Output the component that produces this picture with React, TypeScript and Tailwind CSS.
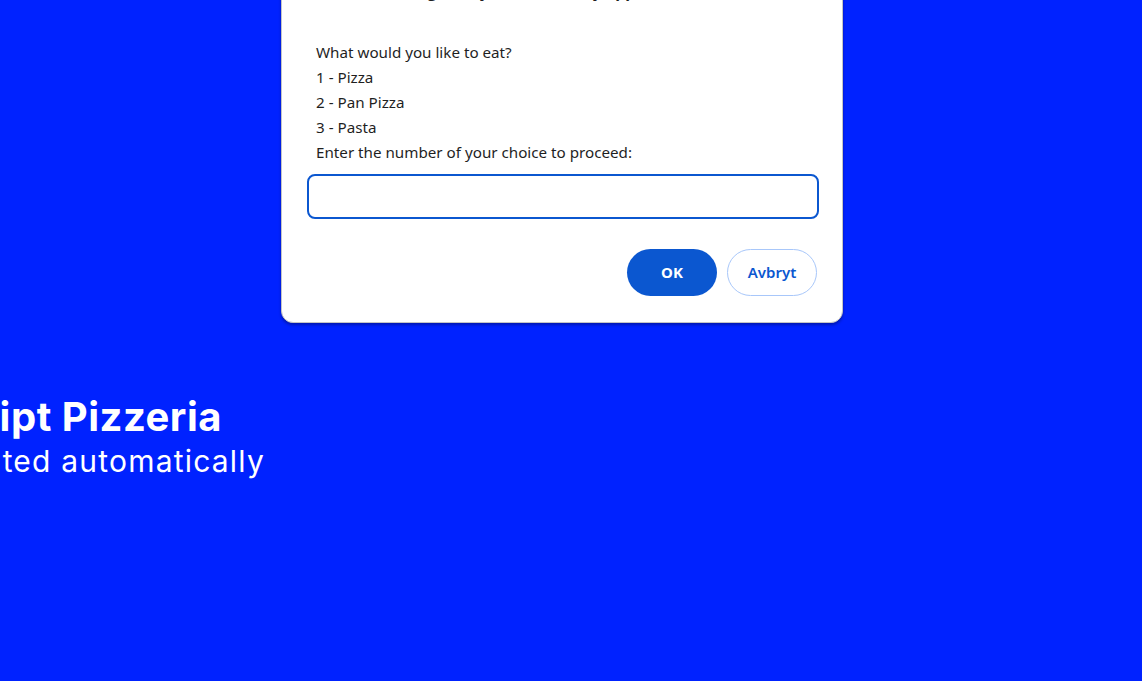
const options = ['1 - Pizza', '2 - Pan Pizza', '3 - Pasta']

function PromptDialog() {
  return (
    <div className="absolute left-[281px] top-[-40px] w-[562px] rounded-xl border border-[#c4c4c4] bg-white shadow-[0_2px_3px_rgba(0,0,0,0.3)] font-['Noto_Sans',sans-serif]">
      <div className="px-[34px] pt-[18px]">
        <h2 className="text-[16px] font-bold leading-[24px] text-[#1f1f1f] whitespace-nowrap">
          incredible-tango-ruby-3f2a1c.netlify.app sier
        </h2>
        <div className="mt-[37px] text-[15.2px] leading-[25px] text-[#1f1f1f]">
          <p>What would you like to eat?</p>
          {options.map((o) => (
            <p key={o}>{o}</p>
          ))}
          <p>Enter the number of your choice to proceed:</p>
        </div>
        <input
          type="text"
          className="mt-[9px] ml-[-9px] block h-[45px] w-[512px] rounded-lg border-2 border-[#0b57d0] px-3 text-[14px] outline-none"
        />
        <div className="mt-[30px] flex justify-end gap-[10px] pb-[26px] mr-[-9px]">
          <button className="h-[47px] w-[90px] rounded-full bg-[#0b57d0] text-[15px] font-bold text-white">
            OK
          </button>
          <button className="h-[47px] w-[90px] rounded-full border border-[#a8c7fa] bg-white text-[15px] font-semibold text-[#0b57d0]">
            Avbryt
          </button>
        </div>
      </div>
    </div>
  )
}

export default function App() {
  return (
    <div className="relative h-[681px] w-full overflow-hidden bg-[#0022ff] font-['Inter',sans-serif] text-white">
      <div className="flex w-[265px] flex-col items-end pt-[391px]">
        <h1 className="mr-[43px] whitespace-nowrap text-[40px] font-bold leading-[52px] tracking-[0.5px]">
          JavaScript Pizzeria
        </h1>
        <p className="whitespace-nowrap text-[30px] leading-[36px] tracking-[1.2px]">
          Orders are created automatically
        </p>
      </div>
      <PromptDialog />
    </div>
  )
}
